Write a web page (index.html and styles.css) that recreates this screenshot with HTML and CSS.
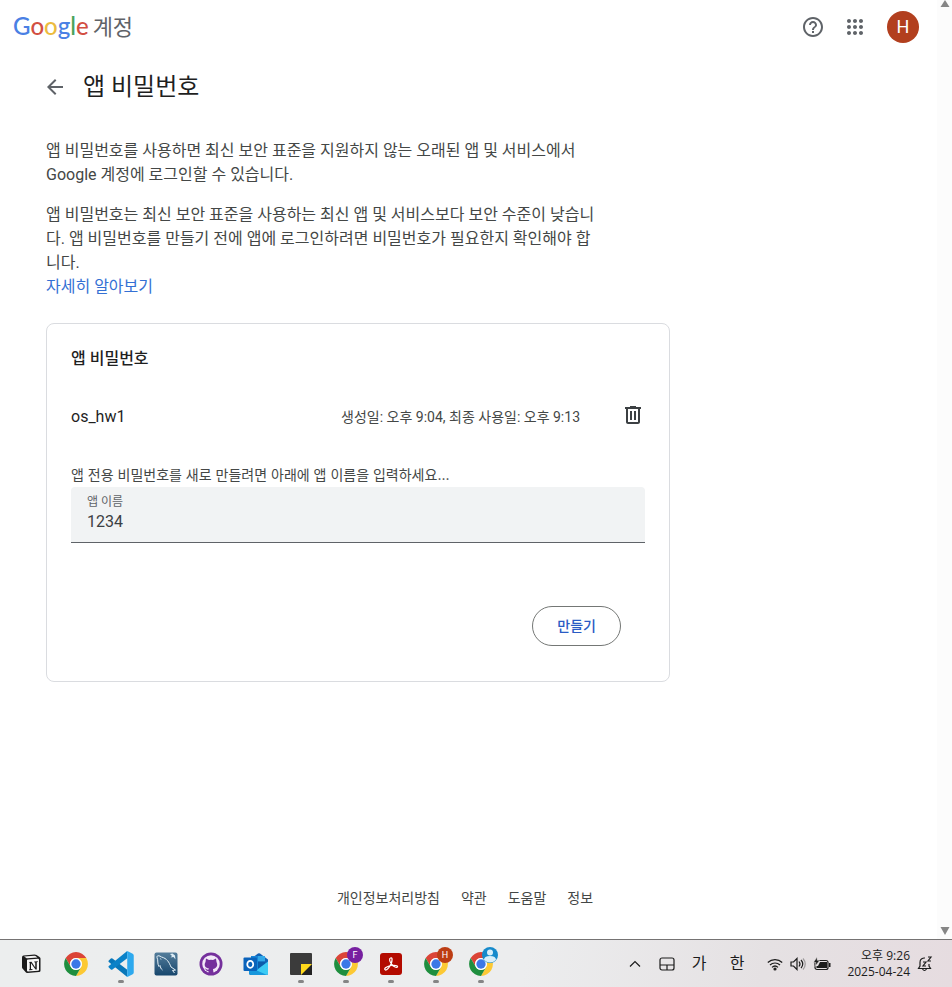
FILE: index.html
```html
<!DOCTYPE html>
<html lang="ko">
<head>
<meta charset="utf-8">
<meta name="viewport" content="width=device-width, initial-scale=1">
<title>앱 비밀번호</title>
<link rel="stylesheet" href="styles.css">
</head>
<body>
<svg class="defs" aria-hidden="true">
  <defs>
    <g id="chrome">
      <path fill="#db4437" d="M4.95 13A22 22 0 0 1 43.05 13H24A11 11 0 0 0 14.47 29.5Z"/>
      <path fill="#fcc934" d="M4.95 13A22 22 0 0 1 43.05 13H24A11 11 0 0 0 14.47 29.5Z" transform="rotate(120 24 24)"/>
      <path fill="#1e8e3e" d="M4.95 13A22 22 0 0 1 43.05 13H24A11 11 0 0 0 14.47 29.5Z" transform="rotate(240 24 24)"/>
      <circle cx="24" cy="24" r="11" fill="#fff"/>
      <circle cx="24" cy="24" r="8.6" fill="#3b78e7"/>
    </g>
  </defs>
</svg>

<div class="window">
  <div class="page">
    <header class="topbar">
      <a class="brand" href="#"><span class="logo"><span class="blue">G</span><span class="red">o</span><span class="yellow">o</span><span class="blue">g</span><span class="green">l</span><span class="red">e</span></span><span class="product">계정</span></a>
      <div class="actions">
        <button class="icon-button" aria-label="도움말">
          <svg width="24" height="24" viewBox="0 0 24 24" fill="#5f6368"><path d="M11 18h2v-2h-2v2zm1-16C6.48 2 2 6.48 2 12s4.48 10 10 10 10-4.48 10-10S17.52 2 12 2zm0 18c-4.41 0-8-3.59-8-8s3.59-8 8-8 8 3.59 8 8-3.59 8-8 8zm0-14c-2.21 0-4 1.79-4 4h2c0-1.1.9-2 2-2s2 .9 2 2c0 2-3 1.75-3 5h2c0-2.250 3-2.500 3-5 0-2.210-1.790-4-4-4z"/></svg>
        </button>
        <button class="icon-button" aria-label="Google 앱">
          <svg width="24" height="24" viewBox="0 0 24 24" fill="#5f6368"><path d="M6 8c1.100 0 2-.9 2-2s-.9-2-2-2-2 .9-2 2 .9 2 2 2zm6 12c1.100 0 2-.9 2-2s-.9-2-2-2-2 .9-2 2 .9 2 2 2zm-6 0c1.100 0 2-.9 2-2s-.9-2-2-2-2 .9-2 2 .9 2 2 2zm0-6c1.100 0 2-.9 2-2s-.9-2-2-2-2 .9-2 2 .9 2 2 2zm6 0c1.100 0 2-.9 2-2s-.9-2-2-2-2 .9-2 2 .9 2 2 2zm4-8c0 1.100.9 2 2 2s2-.9 2-2-.9-2-2-2-2 .9-2 2zm-4 2c1.100 0 2-.9 2-2s-.9-2-2-2-2 .9-2 2 .9 2 2 2zm6 6c1.100 0 2-.9 2-2s-.9-2-2-2-2 .9-2 2 .9 2 2 2zm0 6c1.100 0 2-.9 2-2s-.9-2-2-2-2 .9-2 2 .9 2 2 2z"/></svg>
        </button>
        <button class="avatar">H</button>
      </div>
    </header>

    <main class="content">
      <div class="title-row">
        <button class="back" aria-label="뒤로">
          <svg width="24" height="24" viewBox="0 0 24 24" fill="#5f6368"><path d="M20 11H7.830l5.590-5.590L12 4l-8 8 8 8 1.410-1.410L7.830 13H20v-2z"/></svg>
        </button>
        <h1>앱 비밀번호</h1>
      </div>
      <div class="intro">
        <p>앱 비밀번호를 사용하면 최신 보안 표준을 지원하지 않는 오래된 앱 및 서비스에서 Google 계정에 로그인할 수 있습니다.</p>
        <p>앱 비밀번호는 최신 보안 표준을 사용하는 최신 앱 및 서비스보다 보안 수준이 낮습니다. 앱 비밀번호를 만들기 전에 앱에 로그인하려면 비밀번호가 필요한지 확인해야 합니다.<br><a href="#">자세히 알아보기</a></p>
      </div>
      <section class="card">
        <h2>앱 비밀번호</h2>
        <div class="entry">
          <span class="entry-name">os_hw1</span>
          <span class="entry-meta">생성일: 오후 9:04, 최종 사용일: 오후 9:13</span>
          <button class="icon-button" aria-label="삭제">
            <svg width="24" height="24" viewBox="0 0 24 24" fill="#3c4043"><path d="M15 4V3H9v1H4v2h1v13c0 1.100.9 2 2 2h10c1.100 0 2-.9 2-2V6h1V4h-5zm2 15H7V6h10v13zM9 8h2v9H9zm4 0h2v9h-2z"/></svg>
          </button>
        </div>
        <p class="hint">앱 전용 비밀번호를 새로 만들려면 아래에 앱 이름을 입력하세요...</p>
        <div class="field">
          <label for="app-name">앱 이름</label>
          <input id="app-name" type="text" value="1234">
        </div>
        <div class="card-actions"><button class="create">만들기</button></div>
      </section>
    </main>

    <footer class="footer">
      <a href="#">개인정보처리방침</a><a href="#">약관</a><a href="#">도움말</a><a href="#">정보</a>
    </footer>
  </div>
  <div class="scrollbar" aria-hidden="true">
    <svg width="10" height="8" viewBox="0 0 10 8"><path fill="#868686" d="M5 0L9.500 7H.5z"/></svg>
    <svg width="10" height="8" viewBox="0 0 10 8"><path fill="#868686" d="M.5 0h9L5 8z"/></svg>
  </div>
</div>

<nav class="taskbar">
  <div class="apps">
    <button class="app" aria-label="Notion">
      <svg width="20" height="20" viewBox="0 0 40 40"><path d="M5 3l22-2q2 0 4 1l6 4q2 1 2 3v24q0 3-3 3l-23 2q-3 0-4-2l-6-7q-1-1-1-3V7q0-4 3-4z" fill="#1b1b1b"/><path d="M6 5l21-1.500q1 0 2 .5l4 3-20 1.500q-2 0-3-1z" fill="#f4f4f4"/><path d="M12 12q0-1 2-1l20-1.500q2 0 2 2V32q0 1.500-2 1.500L14 35q-2 0-2-2z" fill="#f7f7f7"/><path d="M16 16l5-.5 7.500 11.500V17l-2-.5V15l7-.5V16l-2 .5V31H29L20 18.500V30l3 .5V32l-7 .5V31l1.500-.5V18z" fill="#1b1b1b"/></svg>
    </button>
    <button class="app" aria-label="Chrome"><svg width="26" height="26" viewBox="0 0 48 48"><use href="#chrome"/></svg></button>
    <button class="app running" aria-label="Visual Studio Code">
      <svg width="26" height="26" viewBox="0 0 100 100"><path d="M3 37l8-8q3-2 6 0l57 43v26q-3 0-6-3L3 42q-3-2 0-5z" fill="#0877b9"/><path d="M3 63l8 8q3 2 6 0l57-43V2q-3 0-6 3L3 58q-3 2 0 5z" fill="#0b82c8"/><path d="M69 98q6 2 9 0l17-9q4-2 4-6V17q0-4-4-6L78 2q-4-2-9 0 5 0 5 6v84q0 6-5 6z" fill="#2da9ee"/></svg>
    </button>
    <button class="app" aria-label="MySQL Workbench">
      <svg width="24" height="24" viewBox="0 0 48 48"><defs><linearGradient id="sea" x2="0" y2="1"><stop stop-color="#547d9b"/><stop offset="1" stop-color="#17466c"/></linearGradient></defs><rect x="1" y="1" width="46" height="46" rx="4" fill="url(#sea)"/><path d="M17 36c-3-2-4-5-5-9l-2 2C6 23 9 17 6 11c-1-5 5-4 9-1 11 3 15 10 19 20l9 6-6 1 4 5M13 13l1 2" fill="none" stroke="#e4f0f7" stroke-width="2"/><path d="M32 4l4 4-3 3 6-1 4 5-1-8-5-4z" fill="#dcecf5"/></svg>
    </button>
    <button class="app" aria-label="GitHub Desktop">
      <svg width="24" height="24" viewBox="0 0 48 48"><circle cx="24" cy="24" r="23" fill="#75309c"/><circle cx="24" cy="24" r="17.500" fill="#f3e9f8"/><path d="M14 13l6 3q4-1 8 0l6-3 1 7c4 8-1 13-7 14l1 8H19v-4c-5 1-5-4-8-5 4-1 5 4 8 2l1-2c-7-1-11-6-7-13z" fill="#75309c"/></svg>
    </button>
    <button class="app" aria-label="Outlook">
      <svg width="26" height="24" viewBox="0 0 52 48"><path d="M12 16L30 3q2-1 4 0l16 12v28q0 3-3 3H16q-4 0-4-4z" fill="#1262b5"/><path d="M16 8h28v19L31 36 16 27z" fill="#1686d9"/><path d="M30 8h14v11H30z" fill="#31a8e8"/><path d="M30 19h14v8l-12 9-2-2z" fill="#0c5cab"/><path d="M50 19v24q0 3-3 3H20l10-12z" fill="#3ccbf4"/><path d="M12 30l36 16H16q-4 0-4-4z" fill="#1797dc"/><rect x="1" y="11" width="27" height="27" rx="2" fill="#0a63bb"/><ellipse cx="14.500" cy="24.500" rx="6" ry="7" fill="none" stroke="#fff" stroke-width="3.500"/></svg>
    </button>
    <button class="app running" aria-label="스티커 메모">
      <svg width="24" height="24" viewBox="0 0 48 48"><rect x="2" y="2" width="44" height="44" rx="2" fill="#3b3b3b"/><path d="M46 24v22H24z" fill="#222"/><path d="M24 24h22L24 46z" fill="#ffd91c"/></svg>
    </button>
    <button class="app running" aria-label="Chrome F"><svg width="26" height="26" viewBox="0 0 48 48"><use href="#chrome"/></svg><span class="badge violet">F</span></button>
    <button class="app running" aria-label="Acrobat">
      <svg width="22" height="22" viewBox="0 0 44 44"><rect width="44" height="44" rx="6" fill="#b30b00"/><path d="M21 10c4-2 4 5 1 12-3 6-7 12-11 12-5-2 3-8 12-9 6-1 13 0 12 3-2 3-9-2-12-6-4-5-5-11-2-12z" fill="none" stroke="#fff" stroke-width="2.500"/></svg>
    </button>
    <button class="app running" aria-label="Chrome H"><svg width="26" height="26" viewBox="0 0 48 48"><use href="#chrome"/></svg><span class="badge rust">H</span></button>
    <button class="app running" aria-label="Chrome 프로필"><svg width="26" height="26" viewBox="0 0 48 48"><use href="#chrome"/></svg><span class="badge sky"><svg width="16" height="16" viewBox="0 0 16 16"><circle cx="8" cy="5.500" r="3" fill="#d9effa"/><path d="M2 13q0-4 6-4t6 4q-6 5-12 0z" fill="#d9effa"/></svg></span></button>
  </div>
  <div class="tray">
    <button class="tray-button" aria-label="숨겨진 아이콘"><svg width="14" height="14" viewBox="0 0 14 14" class="line"><path d="M2 9.500l5-5 5 5"/></svg></button>
    <button class="tray-button" aria-label="터치패드"><svg width="16" height="14" viewBox="0 0 16 14" class="line"><rect x="1" y="1" width="14" height="12" rx="2"/><path d="M1 8h14M8 8v5"/></svg></button>
    <button class="tray-button">가</button>
    <button class="tray-button wide">한</button>
    <button class="status" aria-label="네트워크, 볼륨, 배터리">
      <svg width="16" height="14" viewBox="0 0 16 14" class="line"><path d="M.8 5.500a10.500 10.500 0 0 1 14.400 0M3 8a7.300 7.300 0 0 1 10 0M5 10.400a4.400 4.400 0 0 1 6 0"/><circle cx="8" cy="12" r="1" fill="#1c1c1c"/></svg>
      <svg width="16" height="14" viewBox="0 0 16 14" class="line"><path d="M1 5h2.500L7 1.500v11L3.500 9H1zM9 4.500q2 2.500 0 5M11 3q3.500 4 0 8"/><path d="M13 1.500q4.500 5.500 0 11" opacity=".35"/></svg>
      <svg width="18" height="14" viewBox="0 0 18 14"><rect x="2" y="3.500" width="13" height="9" rx="2" fill="none" stroke="#1c1c1c" stroke-width="1.200"/><path d="M7 5h7v6H3.500V9H5z" fill="#1c1c1c"/><path d="M16 6h1.500v4H16z" fill="#1c1c1c"/><path d="M4 0L.5 5.500H3L2 9.500l4.500-6H4.200z" fill="#1c1c1c" stroke="#e8e4e5" stroke-width=".5"/></svg>
    </button>
    <button class="clock"><span>오후 9:26</span><span>2025-04-24</span></button>
    <button class="bell" aria-label="알림"><svg width="16" height="16" viewBox="0 0 16 16" class="line"><path d="M8 2H7Q3 2.500 3 6.500V10l-1.500 2.500h12L12 10V8M5.500 13q2 3 4 0M6 6h3L6 10h3M11 1h3l-3 4h3"/></svg></button>
  </div>
</nav>
</body>
</html>
```

FILE: styles.css
```css
* {
  box-sizing: border-box;
}

body {
  margin: 0;
  min-height: 100vh;
  display: flex;
  flex-direction: column;
  background: #fff;
  color: #444746;
  font-family: Roboto, "Noto Sans CJK KR", sans-serif;
  font-size: 16px;
  line-height: 24px;
}

h1,
h2,
p {
  margin: 0;
}

a {
  color: inherit;
  text-decoration: none;
}

button {
  padding: 0;
  border: 0;
  background: none;
  color: inherit;
  font: inherit;
  cursor: pointer;
}

svg {
  display: block;
}

.defs {
  position: absolute;
  width: 0;
  height: 0;
}

.window {
  flex: 1;
  display: flex;
}

.page {
  flex: 1;
  display: flex;
  flex-direction: column;
}

.scrollbar {
  width: 15px;
  background: #fcfcfc;
  display: flex;
  flex-direction: column;
  justify-content: space-between;
  align-items: center;
  padding: 0 0 4px;
}

/* Header */
.topbar {
  height: 54px;
  padding: 0 18px 0 13px;
  display: flex;
  align-items: center;
  justify-content: space-between;
}

.brand {
  display: flex;
  align-items: baseline;
  gap: 4px;
}

.logo {
  font-family: Lato, sans-serif;
  font-size: 24px;
  font-weight: 500;
}

.product {
  color: #5f6368;
  font-size: 22px;
}

.blue { color: #4a80e4; }
.red { color: #d24f42; }
.yellow { color: #ecbb3f; }
.green { color: #4ba35c; }

.actions {
  display: flex;
  align-items: center;
  gap: 18px;
}

.avatar {
  width: 32px;
  height: 32px;
  margin-left: 2px;
  border-radius: 50%;
  background: #b23f1e;
  color: #fff;
  font-size: 18px;
}

/* Main */
.content {
  padding: 17px 46px 0;
}

.title-row {
  display: flex;
  align-items: center;
  gap: 16px;
  margin-left: -3px;
}

h1 {
  color: #1f1f1f;
  font-size: 24px;
  font-weight: 400;
  line-height: 32px;
}

.intro {
  max-width: 556px;
  padding-top: 36px;
  display: flex;
  flex-direction: column;
  gap: 16px;
}

.intro a {
  color: #3470d4;
}

.card {
  max-width: 624px;
  margin-top: 24px;
  padding: 23px 24px 35px;
  border: 1px solid #dadce0;
  border-radius: 8px;
}

h2 {
  color: #1f1f1f;
  font-size: 16px;
  font-weight: 500;
}

.entry {
  display: flex;
  align-items: flex-start;
  margin-top: 32px;
  color: #1f1f1f;
}

.entry-name {
  flex: 1;
  padding-top: 2px;
}

.entry-meta {
  margin-right: 41px;
  padding-top: 2px;
  color: #444746;
  font-size: 14px;
}

.hint {
  margin-top: 34px;
  font-family: Inter, "Noto Sans CJK KR", sans-serif;
  font-size: 14px;
}

.field {
  display: flex;
  flex-direction: column;
  height: 56px;
  padding: 7px 16px;
  border-bottom: 1px solid #5f6368;
  border-radius: 4px 4px 0 0;
  background: #f1f3f4;
}

.field label {
  color: #5f6368;
  font-size: 12px;
  line-height: 16px;
}

.field input {
  width: 100%;
  height: 24px;
  padding: 0;
  border: 0;
  outline: 0;
  background: none;
  color: #3c4043;
  font: inherit;
}

.card-actions {
  display: flex;
  justify-content: flex-end;
  padding: 63px 24px 0;
}

.create {
  height: 40px;
  padding: 0 24px;
  border: 1px solid #747775;
  border-radius: 20px;
  color: #2a5bc4;
  font-size: 14px;
  font-weight: 500;
}

.footer {
  display: flex;
  justify-content: center;
  gap: 21px;
  margin-top: auto;
  padding: 24px 16px 29px 9px;
  font-size: 14px;
}

/* Taskbar */
.taskbar {
  display: flex;
  justify-content: space-between;
  height: 48px;
  padding: 0 19px 0 8px;
  border-top: 1px solid #757373;
  background: linear-gradient(100deg, #eceeee 0%, #ecedee 55%, #e5e1e3 80%, #e6dce0 100%);
  color: #1c1c1c;
}

.apps,
.tray,
.status {
  display: flex;
  align-items: center;
}

.app {
  position: relative;
  display: grid;
  place-items: center;
  width: 45px;
  height: 46px;
}

.running::after {
  content: "";
  position: absolute;
  bottom: 4px;
  left: 20px;
  width: 6px;
  height: 3px;
  border-radius: 2px;
  background: #858585;
}

.badge {
  position: absolute;
  top: 6px;
  left: 24px;
  width: 16px;
  height: 16px;
  border-radius: 50%;
  color: #fff;
  font-size: 9px;
  line-height: 16px;
}

.violet { background: #7720a0; }
.rust { background: #bc3d14; }
.sky { background: #168acb; }

.tray-button {
  display: grid;
  place-items: center;
  width: 32px;
  height: 40px;
}

.wide {
  width: 44px;
}

.line {
  fill: none;
  stroke: #1c1c1c;
  stroke-width: 1.2;
}

.status {
  gap: 7px;
  padding-left: 8px;
}

.clock {
  display: flex;
  flex-direction: column;
  align-items: flex-end;
  min-width: 79px;
  font-family: "Open Sans", "Noto Sans CJK KR", sans-serif;
  font-size: 12px;
  line-height: 16px;
}

.bell {
  margin-left: 7px;
}
```
